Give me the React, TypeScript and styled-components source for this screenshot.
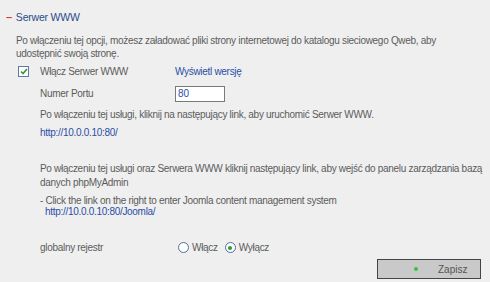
import React, { useState } from 'react';
import styled, { createGlobalStyle } from 'styled-components';

const GlobalStyle = createGlobalStyle`
  html, body {
    margin: 0;
    padding: 0;
    background: #efefef;
  }
  body {
    font-family: 'Liberation Sans', Arial, sans-serif;
    font-size: 10px;
    letter-spacing: -0.3px;
    color: #5c5c5c;
    white-space: nowrap;
  }
`;

function App(): JSX.Element {
    const [enabled, setEnabled] = useState(true);
    const [port, setPort] = useState('80');
    const [registry, setRegistry] = useState<'on' | 'off'>('off');

    return (
        <Page>
            <GlobalStyle />
            <Header>
                <Dash>–</Dash>
                <Title>Serwer WWW</Title>
            </Header>

            <Intro>
                Po włączeniu tej opcji, możesz załadować pliki strony internetowej do katalogu sieciowego Qweb, aby<br />
                udostępnić swoją stronę.
            </Intro>

            <Row $top={1}>
                <CheckCell>
                    <CheckBox checked={enabled} onClick={() => setEnabled(!enabled)}>
                        {enabled && (
                            <svg width="8" height="7" viewBox="0 0 8 7">
                                <path d="M1 3.5 L3 5.5 L7 1" stroke="#2f9a2f" strokeWidth="1.6" fill="none" />
                            </svg>
                        )}
                    </CheckBox>
                </CheckCell>
                <Label>Włącz Serwer WWW</Label>
                <Link href="#">Wyświetl wersję</Link>
            </Row>

            <Row $top={1}>
                <CheckCell />
                <Label>Numer Portu</Label>
                <PortInput value={port} onChange={(e) => setPort(e.target.value)} />
            </Row>

            <Block $top={4}>
                <Text>Po włączeniu tej usługi, kliknij na następujący link, aby uruchomić Serwer WWW.</Text>
                <Link href="#" $gap={5}>http://10.0.0.10:80/</Link>
            </Block>

            <Block $top={23}>
                <Text $lh={14}>
                    Po włączeniu tej usługi oraz Serwera WWW kliknij następujący link, aby wejść do panelu zarządzania bazą<br />
                    danych phpMyAdmin
                </Text>
                <Text $lh={14} $gap={4}>- Click the link on the right to enter Joomla content management system</Text>
                <Link href="#" $gap={-3} $indent={5}>http://10.0.0.10:80/Joomla/</Link>
            </Block>

            <Row $top={19}>
                <CheckCell />
                <Label>globalny rejestr</Label>
                <RadioGroup>
                    <RadioOption onClick={() => setRegistry('on')}>
                        <Radio $on={registry === 'on'} />
                        Włącz
                    </RadioOption>
                    <RadioOption onClick={() => setRegistry('off')}>
                        <Radio $on={registry === 'off'} />
                        Wyłącz
                    </RadioOption>
                </RadioGroup>
            </Row>

            <Footer>
                <SaveButton>
                    <Dot />
                    <span>Zapisz</span>
                </SaveButton>
            </Footer>
        </Page>
    );
}

const Page = styled.div`
  width: 490px;
  height: 282px;
  box-sizing: border-box;
  padding: 10px 0 0 0;
  display: flex;
  flex-direction: column;
  overflow: hidden;
`;

const Header = styled.div`
  display: flex;
  align-items: center;
  gap: 4px;
  margin-left: 6px;
  height: 14px;
  font-size: 11px;
`;

const Dash = styled.span`
  color: #d0452a;
  font-weight: bold;
`;

const Title = styled.span`
  color: #2b4c8c;
  font-size: 10.5px;
  letter-spacing: -0.2px;
`;

const Intro = styled.p`
  margin: 10px 0 0 16px;
  line-height: 13px;
`;

const Row = styled.div<{ $top?: number }>`
  display: flex;
  align-items: center;
  height: 21px;
  margin-top: ${(p) => (p.$top ? p.$top : 0)}px;
`;

const CheckCell = styled.div`
  width: 40px;
  display: flex;
  justify-content: flex-start;
  padding-left: 18px;
  box-sizing: border-box;
`;

const CheckBox = styled.div<{ checked: boolean }>`
  width: 9px;
  height: 9px;
  border: 1px solid #5a7aa8;
  background: #fff;
  display: flex;
  align-items: center;
  justify-content: center;
  cursor: pointer;
`;

const Label = styled.span`
  width: 135px;
`;

const Link = styled.a<{ $gap?: number; $indent?: number }>`
  color: #2b4ea6;
  text-decoration: none;
  display: block;
  margin-top: ${(p) => p.$gap || 0}px;
  margin-left: ${(p) => p.$indent || 0}px;
  line-height: 13px;
`;

const PortInput = styled.input`
  width: 44px;
  height: 14px;
  padding: 0 2px;
  border: 1px solid #7a7a7a;
  font-family: 'Liberation Sans', Arial, sans-serif;
  font-size: 10px;
  color: #2b4ea6;
  outline: none;
`;

const Block = styled.div<{ $top?: number }>`
  margin: ${(p) => p.$top || 0}px 0 0 40px;
  display: flex;
  flex-direction: column;
`;

const Text = styled.div<{ $gap?: number; $lh?: number }>`
  line-height: ${(p) => p.$lh || 13}px;
  margin-top: ${(p) => p.$gap || 0}px;
`;

const RadioGroup = styled.div`
  display: flex;
  align-items: center;
  gap: 7px;
  margin-left: 3px;
`;

const RadioOption = styled.label`
  display: flex;
  align-items: center;
  gap: 3px;
  cursor: pointer;
`;

const Radio = styled.span<{ $on: boolean }>`
  width: 9px;
  height: 9px;
  border-radius: 50%;
  border: 1px solid #4f6f9f;
  background: #fff;
  position: relative;
  &::after {
    content: '';
    display: ${(p) => (p.$on ? 'block' : 'none')};
    position: absolute;
    left: 2.5px;
    top: 2.5px;
    width: 4px;
    height: 4px;
    border-radius: 50%;
    background: #2f9a2f;
  }
`;

const Footer = styled.div`
  margin-top: auto;
  display: flex;
  justify-content: flex-end;
  padding: 0 9px 3px 0;
`;

const SaveButton = styled.button`
  width: 104px;
  height: 20px;
  background: #c9c9c9;
  border: 1px solid #444;
  display: flex;
  align-items: center;
  padding: 0 0 0 36px;
  gap: 20px;
  font-family: 'Liberation Sans', Arial, sans-serif;
  font-size: 10px;
  color: #555;
  cursor: pointer;
`;

const Dot = styled.span`
  width: 4px;
  height: 4px;
  border-radius: 50%;
  background: #3cc23c;
`;

export default App;
